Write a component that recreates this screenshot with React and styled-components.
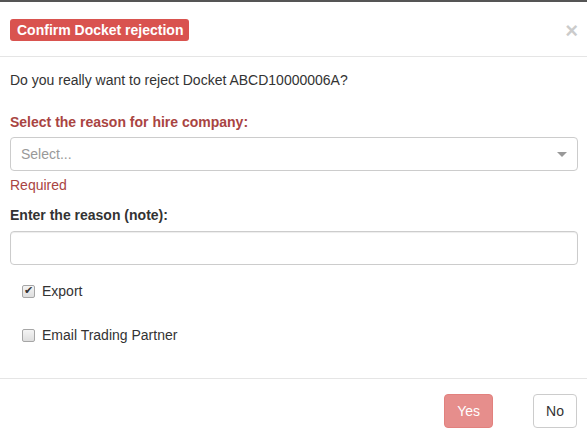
import React from "react";
import styled, { createGlobalStyle } from "styled-components";

const Global = createGlobalStyle`
  html, body { margin: 0; padding: 0; background: #fff; }
  body { font-family: "Liberation Sans", Arial, sans-serif; font-size: 14px; line-height: 20px; color: #333; }
  * { box-sizing: border-box; }
`;

const Modal = styled.div`
  width: 587px;
  height: 440px;
  border-top: 2px solid #555;
  display: flex;
  flex-direction: column;
  overflow: hidden;
`;

const Header = styled.div`
  display: flex;
  justify-content: space-between;
  align-items: flex-start;
  padding: 17px 9px 15px 10px;
  border-bottom: 1px solid #e5e5e5;
`;

const Badge = styled.span`
  display: inline-block;
  background: #d9534f;
  color: #fff;
  font-weight: bold;
  font-size: 14px;
  line-height: 22px;
  height: 22px;
  padding: 0 6px 0 7px;
  border-radius: 3px;
`;

const Close = styled.button`
  border: 0;
  background: none;
  padding: 0;
  margin-top: 1px;
  font-family: "Liberation Sans", Arial, sans-serif;
  font-size: 22px;
  font-weight: bold;
  line-height: 21px;
  color: #000;
  opacity: 0.2;
  cursor: pointer;
`;

const Body = styled.div`
  padding: 13px 9px 0 10px;
  display: flex;
  flex-direction: column;
  flex: 1;
`;

const Text = styled.p`
  margin: 0 0 22px 0;
`;

const Label = styled.div`
  font-weight: bold;
  color: ${(p) => (p.$error ? "#a94442" : "#333")};
  margin-bottom: ${(p) => p.$mb || 5}px;
`;

const SelectBox = styled.div`
  height: 34px;
  border: 1px solid #ccc;
  border-radius: 4px;
  display: flex;
  align-items: center;
  justify-content: space-between;
  padding: 0 10px;
  color: #999;
`;

const Caret = styled.span`
  width: 0;
  height: 0;
  border-style: solid;
  border-width: 5px 5px 2.5px;
  border-color: #999 transparent transparent;
  margin-top: 2px;
`;

const Help = styled.div`
  color: #a94442;
  margin-top: 4px;
  margin-bottom: 10px;
`;

const Input = styled.input`
  height: 34px;
  border: 1px solid #ccc;
  border-radius: 4px;
  box-shadow: inset 0 1px 1px rgba(0, 0, 0, 0.075);
  padding: 6px 12px;
  font: inherit;
  width: 100%;
`;

const Checks = styled.div`
  display: flex;
  flex-direction: column;
  gap: 24px;
  padding-left: 12px;
  margin-top: 16px;
`;

const CheckRow = styled.label`
  display: flex;
  align-items: center;
  gap: 7px;
  height: 20px;
  color: #333;
`;

const Box = styled.input`
  appearance: none;
  -webkit-appearance: none;
  margin: 1px 0 0 0;
  width: 13px;
  height: 13px;
  border: 1px solid #a6a6a6;
  border-radius: 2px;
  background: linear-gradient(#f4f4f4, #dedede);
  position: relative;
  &:checked::after {
    content: "✔";
    position: absolute;
    left: 1px;
    top: -3px;
    font-size: 11px;
    line-height: 16px;
    color: #333;
    font-family: "DejaVu Sans", sans-serif;
  }
`;

const Footer = styled.div`
  border-top: 1px solid #e5e5e5;
  padding: 15px 10px 0 10px;
  display: flex;
  justify-content: flex-end;
  gap: 40px;
  height: 62px;
`;

const Btn = styled.button`
  height: 34px;
  padding: 6px 12px;
  font-family: "Liberation Sans", Arial, sans-serif;
  font-size: 14px;
  line-height: 20px;
  border-radius: 4px;
  border: 1px solid ${(p) => (p.$danger ? "#d43f3a" : "#ccc")};
  background: ${(p) => (p.$danger ? "#d9534f" : "#fff")};
  color: ${(p) => (p.$danger ? "#fff" : "#333")};
  opacity: ${(p) => (p.$danger ? 0.65 : 1)};
`;

export default function App() {
  return (
    <>
      <Global />
      <Modal>
        <Header>
          <Badge>Confirm Docket rejection</Badge>
          <Close aria-label="Close">×</Close>
        </Header>
        <Body>
          <Text>Do you really want to reject Docket ABCD10000006A?</Text>
          <Label $error>Select the reason for hire company:</Label>
          <SelectBox>
            <span>Select...</span>
            <Caret />
          </SelectBox>
          <Help>Required</Help>
          <Label $mb={6}>Enter the reason (note):</Label>
          <Input type="text" />
          <Checks>
            <CheckRow>
              <Box type="checkbox" defaultChecked />
              Export
            </CheckRow>
            <CheckRow>
              <Box type="checkbox" />
              Email Trading Partner
            </CheckRow>
          </Checks>
        </Body>
        <Footer>
          <Btn $danger disabled>Yes</Btn>
          <Btn>No</Btn>
        </Footer>
      </Modal>
    </>
  );
}
